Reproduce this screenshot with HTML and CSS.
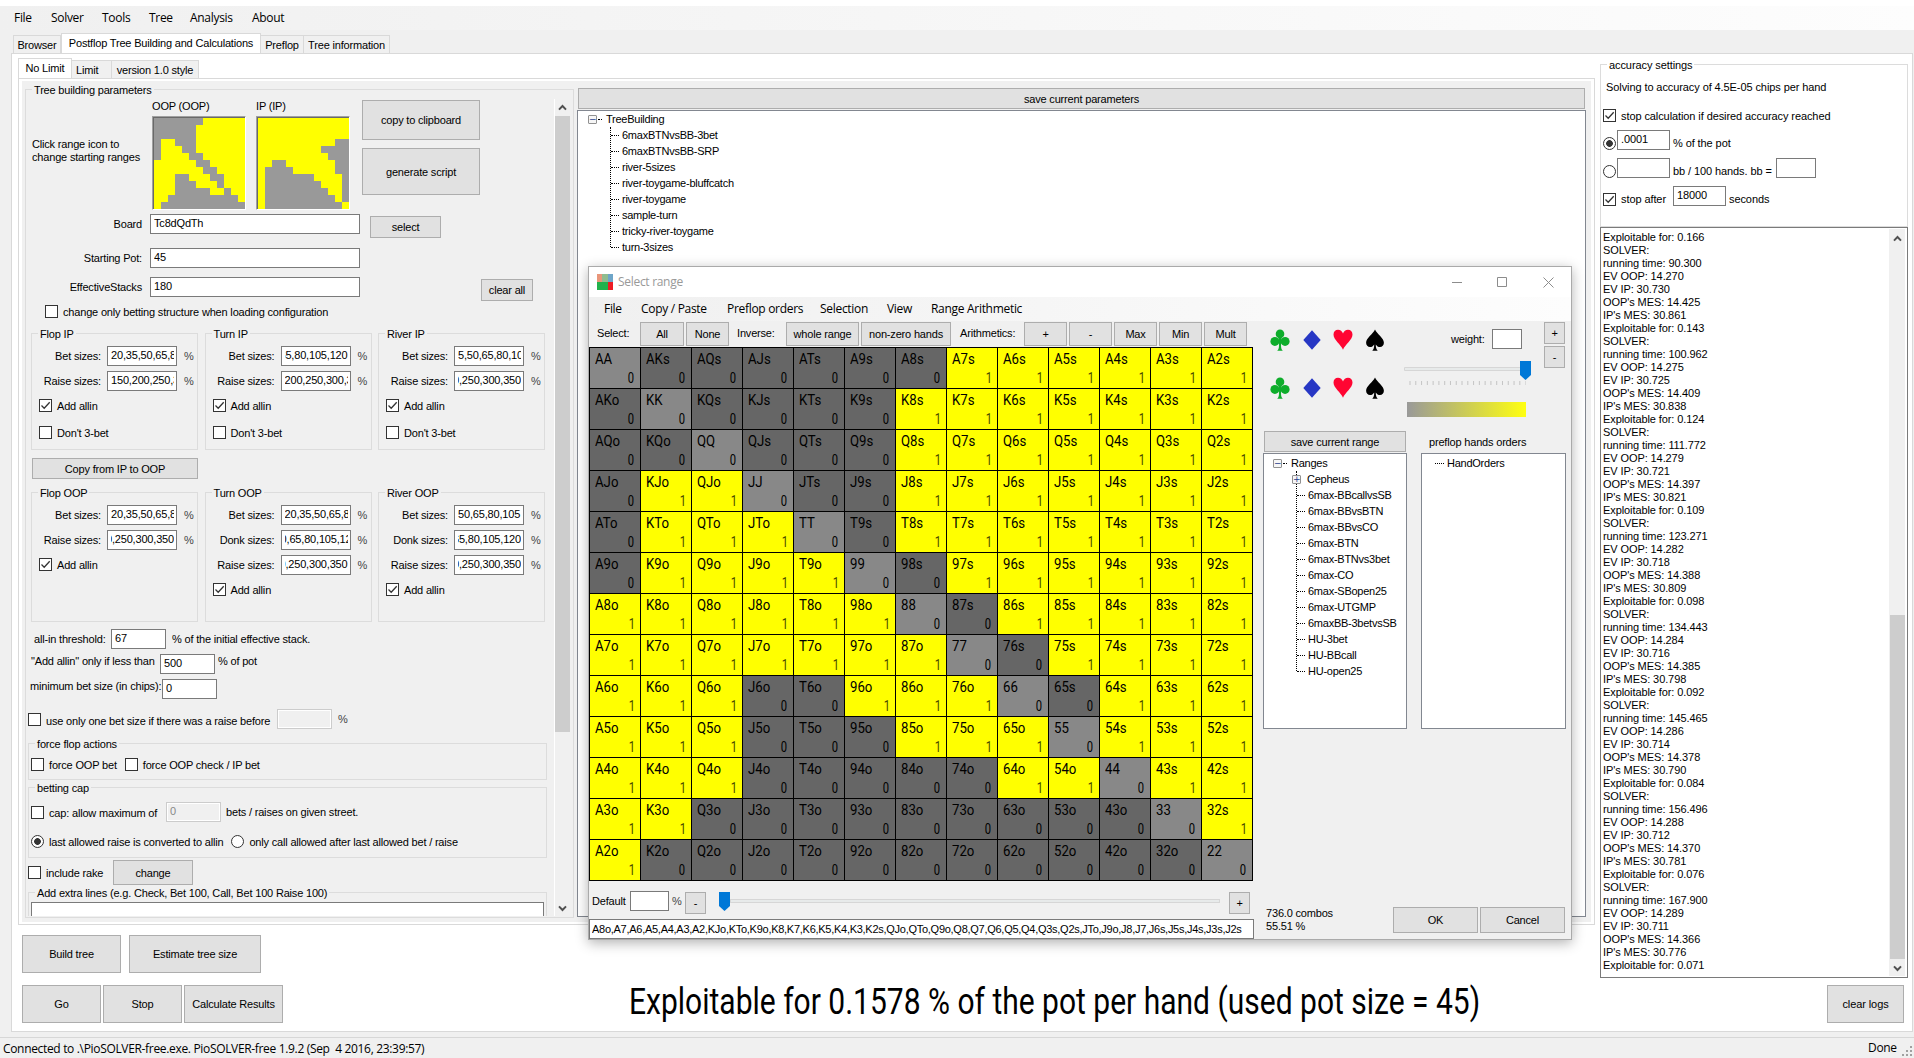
FILE: index.html
```html
<!DOCTYPE html>
<html lang="en">
<head>
<meta charset="utf-8">
<title>PioSOLVER-free</title>
<link rel="stylesheet" href="styles.css">
</head>
<body>
<svg class="defs" width="0" height="0">
  <symbol id="tick" viewBox="0 0 11 11"><path d="M1.5 5.5 4.2 8.2 9.7 2.2" fill="none" stroke="#333" stroke-width="1.3"/></symbol>
  <symbol id="up" viewBox="0 0 9 7"><path d="M1 5.6 4.5 2 8 5.6" fill="none" stroke="#505050" stroke-width="2"/></symbol>
  <symbol id="down" viewBox="0 0 9 7"><path d="M1 1.4 4.5 5 8 1.4" fill="none" stroke="#505050" stroke-width="2"/></symbol>
  <symbol id="club" viewBox="0 0 20 22"><g fill="#0ead2b"><circle cx="10" cy="4.9" r="4.3"/><circle cx="4.9" cy="12.4" r="4.5"/><circle cx="15.1" cy="12.4" r="4.5"/><path d="M8.6 8h2.8l.2 4 -.6 4c0 3 .4 4.400 1.800 5.700H7.200C8.600 20.400 9 19 9 16l-.6-4z"/></g></symbol>
  <symbol id="diamond" viewBox="0 0 20 22"><path d="M10 1.300 18.700 11 10 20.700 1.300 11z" fill="#2737c4"/></symbol>
  <symbol id="heart" viewBox="0 0 20 22"><path d="M10 20.800C8 15.500.5 11 .5 5.500.5 2.500 2.500.8 5 .8c2.300 0 4.200 1.400 5 3.800C10.800 2.200 12.700.8 15 .8c2.500 0 4.500 1.700 4.500 4.700C19.500 11 12 15.500 10 20.800z" fill="#ff0532"/></symbol>
  <symbol id="spade" viewBox="0 0 20 22"><path d="M10 .5C12 5 18.900 9 18.900 13.800c0 2.500-1.700 4.200-3.900 4.200-1.700 0-3.200-.9-4.200-2.600 0 3 .5 4.800 1.900 6.300H7.300c1.400-1.500 1.900-3.300 1.900-6.300C8.200 17.100 6.700 18 5 18c-2.200 0-3.900-1.700-3.900-4.200C1.100 9 8 5 10 .5z" fill="#000"/></symbol>
</svg>

<div class="strip"></div>
<nav class="menubar"><span class="m-file">File</span><span class="m-solver">Solver</span><span class="m-tools">Tools</span><span class="m-tree">Tree</span><span class="m-analysis">Analysis</span><span>About</span></nav>
<div class="tabs main-tabs"><span class="tab t-browser">Browser</span><span class="tab t-post on">Postflop Tree Building and Calculations</span><span class="tab t-pre">Preflop</span><span class="tab t-info">Tree information</span></div>

<main class="page">
  <section class="left">
    <div class="tabs inner-tabs"><span class="tab t-nl on">No Limit</span><span class="tab t-lim">Limit</span><span class="tab t-v1">version 1.0 style</span></div>
    <div class="inner-page"><div class="inner-body">

      <div class="group params"><span class="legend">Tree building parameters</span>
        <div class="params-row">
          <div class="pane">
            <div class="ranges">
              <p class="hint">Click range icon to<br>change starting ranges</p>
              <div class="range"><span>OOP (OOP)</span><div class="rangeicon" id="oop"></div></div>
              <div class="range ip"><span>IP (IP)</span><div class="rangeicon" id="ip"></div></div>
              <div class="range-btns"><button class="b-copy">copy to clipboard</button><button class="b-gen">generate script</button></div>
            </div>
            <div class="line l-board"><label>Board</label><div class="inp"><i>Tc8dQdTh</i></div><button class="b-select">select</button></div>
            <div class="line l-pot"><label>Starting Pot:</label><div class="inp"><i>45</i></div></div>
            <div class="line l-eff"><label>EffectiveStacks</label><div class="inp"><i>180</i></div><button class="b-clear">clear all</button></div>
            <div class="check only-struct"><b class="cb"></b>change only betting structure when loading configuration</div>

            <div class="streets ips">
              <div class="group street"><span class="legend">Flop IP</span>
                <div class="fields">
                  <div class="field"><label>Bet sizes:</label><div class="inp"><i>20,35,50,65,8</i></div><em>%</em></div>
                  <div class="field"><label>Raise sizes:</label><div class="inp"><i>150,200,250,3</i></div><em>%</em></div>
                </div>
                <div class="check"><b class="cb"><svg><use href="#tick"/></svg></b>Add allin</div>
                <div class="check second"><b class="cb"></b>Don't 3-bet</div>
              </div>
              <div class="group street"><span class="legend">Turn IP</span>
                <div class="fields">
                  <div class="field"><label>Bet sizes:</label><div class="inp end"><i>65,80,105,120</i></div><em>%</em></div>
                  <div class="field"><label>Raise sizes:</label><div class="inp"><i>200,250,300,3</i></div><em>%</em></div>
                </div>
                <div class="check"><b class="cb"><svg><use href="#tick"/></svg></b>Add allin</div>
                <div class="check second"><b class="cb"></b>Don't 3-bet</div>
              </div>
              <div class="group street"><span class="legend">River IP</span>
                <div class="fields">
                  <div class="field"><label>Bet sizes:</label><div class="inp"><i>5,50,65,80,10</i></div><em>%</em></div>
                  <div class="field"><label>Raise sizes:</label><div class="inp end"><i>0,250,300,350</i></div><em>%</em></div>
                </div>
                <div class="check"><b class="cb"><svg><use href="#tick"/></svg></b>Add allin</div>
                <div class="check second"><b class="cb"></b>Don't 3-bet</div>
              </div>
            </div>
            <button class="b-ip2oop">Copy from IP to OOP</button>
            <div class="streets oops">
              <div class="group street"><span class="legend">Flop OOP</span>
                <div class="fields">
                  <div class="field"><label>Bet sizes:</label><div class="inp"><i>20,35,50,65,8</i></div><em>%</em></div>
                  <div class="field"><label>Raise sizes:</label><div class="inp end"><i>0,250,300,350</i></div><em>%</em></div>
                </div>
                <div class="check"><b class="cb"><svg><use href="#tick"/></svg></b>Add allin</div>
              </div>
              <div class="group street"><span class="legend">Turn OOP</span>
                <div class="fields">
                  <div class="field"><label>Bet sizes:</label><div class="inp"><i>20,35,50,65,8</i></div><em>%</em></div>
                  <div class="field"><label>Donk sizes:</label><div class="inp mid"><i>0,65,80,105,12</i></div><em>%</em></div>
                  <div class="field"><label>Raise sizes:</label><div class="inp end"><i>0,250,300,350</i></div><em>%</em></div>
                </div>
                <div class="check"><b class="cb"><svg><use href="#tick"/></svg></b>Add allin</div>
              </div>
              <div class="group street"><span class="legend">River OOP</span>
                <div class="fields">
                  <div class="field"><label>Bet sizes:</label><div class="inp"><i>50,65,80,105</i></div><em>%</em></div>
                  <div class="field"><label>Donk sizes:</label><div class="inp end"><i>65,80,105,120</i></div><em>%</em></div>
                  <div class="field"><label>Raise sizes:</label><div class="inp end"><i>0,250,300,350</i></div><em>%</em></div>
                </div>
                <div class="check"><b class="cb"><svg><use href="#tick"/></svg></b>Add allin</div>
              </div>
            </div>

            <div class="opt o-thr"><label>all-in threshold:</label><div class="inp"><i>67</i></div><span>% of the initial effective stack.</span></div>
            <div class="opt o-add"><label>"Add allin" only if less than</label><div class="inp"><i>500</i></div><span>% of pot</span></div>
            <div class="opt o-min"><label>minimum bet size (in chips):</label><div class="inp"><i>0</i></div></div>
            <div class="opt o-one"><div class="check"><b class="cb"></b>use only one bet size if there was a raise before</div><div class="inp off"></div><em>%</em></div>
            <div class="group wide force"><span class="legend">force flop actions</span>
              <div class="checks"><div class="check"><b class="cb"></b>force OOP bet</div><div class="check"><b class="cb"></b>force OOP check / IP bet</div></div>
            </div>
            <div class="group wide cap"><span class="legend">betting cap</span>
              <div class="capline"><div class="check"><b class="cb"></b>cap: allow maximum of</div><div class="inp off"><i>0</i></div><span>bets / raises on given street.</span></div>
              <div class="checks radios"><div class="check"><b class="rb sel"></b>last allowed raise is converted to allin</div><div class="check"><b class="rb"></b>only call allowed after last allowed bet / raise</div></div>
            </div>
            <div class="rake"><div class="check"><b class="cb"></b>include rake</div><button>change</button></div>
            <div class="group wide extra"><span class="legend">Add extra lines (e.g. Check, Bet 100, Call, Bet 100 Raise 100)</span><div class="inp"></div></div>
          </div>
          <div class="scroll s-params"><svg><use href="#up"/></svg><div class="thumb"></div><svg><use href="#down"/></svg></div>
        </div>
      </div>

      <div class="saved">
        <button class="b-save">save current parameters</button>
        <div class="treebox">
          <div class="node root"><b class="exp">−</b><span>TreeBuilding</span></div>
          <ul class="kids"><li>6maxBTNvsBB-3bet</li><li>6maxBTNvsBB-SRP</li><li>river-5sizes</li><li>river-toygame-bluffcatch</li><li>river-toygame</li><li>sample-turn</li><li>tricky-river-toygame</li><li>turn-3sizes</li></ul>
        </div>
      </div>
    </div></div>

    <div class="bottom">
      <div class="runs">
        <div class="btnrow"><button class="b-build">Build tree</button><button class="b-est">Estimate tree size</button></div>
        <div class="btnrow tight"><button class="b-go">Go</button><button class="b-go">Stop</button><button class="b-build">Calculate Results</button></div>
      </div>
      <div class="result">Exploitable for 0.1578 % of the pot per hand (used pot size = 45)</div>
    </div>
  </section>

  <aside class="right">
    <div class="group acc"><span class="legend">accuracy settings</span>
      <p class="solving">Solving to accuracy of 4.5E-05 chips per hand</p>
      <div class="check a-stop"><b class="cb"><svg><use href="#tick"/></svg></b>stop calculation if desired accuracy reached</div>
      <div class="arow a-pct"><b class="rb sel"></b><div class="inp"><i>.0001</i></div><span>% of the pot</span></div>
      <div class="arow a-bb"><b class="rb"></b><div class="inp"></div><span>bb / 100 hands. bb =</span><div class="inp small"></div></div>
      <div class="arow a-after"><b class="cb"><svg><use href="#tick"/></svg></b><span class="after">stop after</span><div class="inp"><i>18000</i></div><span>seconds</span></div>
    </div>
    <div class="log"><pre id="log"></pre><div class="scroll s-log"><svg><use href="#up"/></svg><div class="thumb"></div><svg><use href="#down"/></svg></div></div>
    <button class="b-logs">clear logs</button>
  </aside>
</main>

<footer class="status"><span class="conn">Connected to .\PioSOLVER-free.exe. PioSOLVER-free 1.9.2 (Sep&nbsp; 4 2016, 23:39:57)</span><span class="done">Done</span>
  <svg class="grip" viewBox="0 0 11 11"><path fill="#a0a0a0" d="M8 0h2v2H8zM8 4h2v2H8zM4 4h2v2H4zM8 8h2v2H8zM4 8h2v2H4zM0 8h2v2H0z"/></svg></footer>

<div class="dialog">
  <header><svg class="app" viewBox="0 0 16 16"><path fill="#e9967a" d="M0 0h5v8H0z"/><path fill="#8fbc8f" d="M5 0h6v8H5z"/><path fill="#6ea5c8" d="M11 0h5v8h-5z"/><path fill="#22b14c" d="M0 8h11v8H0z"/><path fill="#ed1c24" d="M11 8h5v8h-5z"/></svg><span>Select range</span>
    <svg class="win" viewBox="0 0 103 11"><g fill="none" stroke="#8c8c8c"><path d="M0 5.500h10"/><path d="M45.500.5h9v9h-9z"/><path d="M91.500.5l10 10M101.500.5l-10 10"/></g></svg></header>
  <nav class="dmenu"><span class="d1">File</span><span class="d2">Copy / Paste</span><span class="d3">Preflop orders</span><span class="d4">Selection</span><span class="d5">View</span><span>Range Arithmetic</span></nav>
  <div class="dbody">
    <div class="dleft">
      <div class="tools"><label class="k1">Select:</label><button class="w44">All</button><button class="w43">None</button><label class="k2">Inverse:</label><button class="w73">whole range</button><button class="w90">non-zero hands</button><label class="k3">Arithmetics:</label><button class="w43">+</button><button class="w43">-</button><button class="w43">Max</button><button class="w43">Min</button><button class="w43">Mult</button></div>
      <div class="matrix" id="matrix"></div>
      <div class="def"><label>Default</label><div class="inp"></div><em>%</em><button>-</button><div class="slider"><svg viewBox="0 0 11 19"><path d="M0 0h11v14l-5.500 5L0 14z" fill="#0078d7"/></svg><div class="track"></div></div><button>+</button></div>
      <div class="inp hands"><i>A8o,A7,A6,A5,A4,A3,A2,KJo,KTo,K9o,K8,K7,K6,K5,K4,K3,K2s,QJo,QTo,Q9o,Q8,Q7,Q6,Q5,Q4,Q3s,Q2s,JTo,J9o,J8,J7,J6s,J5s,J4s,J3s,J2s</i></div>
    </div>
    <div class="dright">
      <div class="upper">
        <div class="suits">
          <svg><use href="#club"/></svg><svg><use href="#diamond"/></svg><svg><use href="#heart"/></svg><svg><use href="#spade"/></svg>
          <svg><use href="#club"/></svg><svg><use href="#diamond"/></svg><svg><use href="#heart"/></svg><svg><use href="#spade"/></svg>
        </div>
        <div class="weight">
          <div class="wline"><label>weight:</label><div class="inp"></div></div>
          <svg class="wslider" viewBox="0 0 128 26"><path d="M.5 6.500h120v3H.5z" fill="#e7eaea" stroke="#d6d6d6"/><path d="M116 0h11v14l-5.500 5-5.500-5z" fill="#0078d7"/><path d="M5.500 22h116.100" stroke="#c4c4c4" stroke-width="4" stroke-dasharray="1 4.780"/></svg>
          <div class="grad"></div>
        </div>
        <div class="pm"><button>+</button><button>-</button></div>
      </div>
      <div class="lists">
        <div class="list"><button>save current range</button>
          <div class="treebox">
            <div class="node root"><b class="exp">−</b><span>Ranges</span></div>
            <ul class="kids"><li class="has"><b class="exp">+</b>Cepheus</li><li>6max-BBcallvsSB</li><li>6max-BBvsBTN</li><li>6max-BBvsCO</li><li>6max-BTN</li><li>6max-BTNvs3bet</li><li>6max-CO</li><li>6max-SBopen25</li><li>6max-UTGMP</li><li>6maxBB-3betvsSB</li><li>HU-3bet</li><li>HU-BBcall</li><li>HU-open25</li></ul>
          </div></div>
        <div class="list orders"><label>preflop hands orders</label>
          <div class="treebox"><div class="node lone"><span>HandOrders</span></div></div></div>
      </div>
      <div class="dfoot"><p>736.0 combos<br>55.51 %</p><button>OK</button><button>Cancel</button></div>
    </div>
  </div>
</div>
<script src="app.js"></script>
</body>
</html>
```
FILE: styles.css
```css
*{box-sizing:border-box;margin:0;padding:0}
body{width:1914px;height:1058px;overflow:hidden;background:#f0f0f0;color:#000;font:11px/13px "Liberation Sans",Arial,sans-serif;letter-spacing:-.18px;display:flex;flex-direction:column;white-space:nowrap}
.defs{display:none}
svg{display:block;flex:none}
i,em{font-style:normal}
em{color:#444}
button{font:inherit;letter-spacing:inherit;color:#000;background:#e1e1e1;border:1px solid #adadad;flex:none;display:block;text-align:center;padding-top:1px}
.inp{border:1px solid #7a7a7a;background:#fff;height:20px;padding:0 3px;display:flex;align-items:center;flex:none}
.inp i{flex:1;min-width:0;overflow:hidden;display:flex;height:14px;line-height:13px}
.inp.end i{justify-content:flex-end}
.inp.mid i{justify-content:center}
.inp.off{border-color:#ccc;background:#f0f0f0;color:#888;box-shadow:inset 0 0 0 1px #fff}
.check{display:flex;align-items:center;height:13px;flex:none;padding-top:2px}
.cb,.rb{width:13px;height:13px;border:1px solid #333;background:#fff;flex:none;margin-right:5px;display:block}
.check .cb,.check .rb{margin-top:-2px}
.cb svg{width:11px;height:11px}
.rb{border-radius:50%}
.rb.sel{background:radial-gradient(circle,#333 3px,#fff 3.700px)}
.group{border:1px solid #dcdcdc;flex:none}
.legend{display:block;width:fit-content;height:13px;margin:-7px 0 0 6px;padding:1px 2px 0;background:#f0f0f0}

.strip{height:6px;background:#fff;flex:none}
.menubar,.dmenu{font:12px/24px "Open Sans","Noto Sans",sans-serif;letter-spacing:-.3px;height:24px;display:flex;flex:none;background:linear-gradient(90deg,#f0f0f0,#fdfdfd)}
.menubar{padding-left:14px}
.m-file{width:37px}.m-solver{width:51px}.m-tools{width:47px}.m-tree{width:41px}.m-analysis{width:62px}
.tabs{display:flex;align-items:flex-end;flex:none}
.tab{height:18px;border:1px solid #d9d9d9;border-left-width:0;border-bottom:0;line-height:18px;text-align:center}
.tab.on{background:#fff;height:21px;margin-bottom:-1px;line-height:19px;border-left-width:1px}
.main-tabs{height:20px;margin:3px 0 0 13px}
.t-browser{width:48px;border-left-width:1px}.t-post{width:200px}.t-pre{width:43px}.t-info{width:86px}

.page{margin-left:11px;width:1902px;height:979px;border:1px solid #d9d9d9;background:#fff;display:flex;flex:none}
.left{width:1588px;display:flex;flex-direction:column}
.inner-tabs{height:20px;margin:4px 0 0 6px}
.t-nl{width:54px}.t-lim{width:40px;text-align:left;padding-left:4px}.t-v1{width:87px}
.inner-tabs .tab:not(.on){background:#f0f0f0}
.inner-page{margin-left:6px;width:1577px;height:847px;border:1px solid #d9d9d9;padding:2px 3px;flex:none}
.inner-body{background:#f0f0f0;height:841px;display:flex}
.params{width:549px;height:829px;margin:8px 0 0 3px}
.params-row{display:flex;height:820px;overflow:hidden}
.pane{width:528px;flex:none}
.ranges{display:flex;height:114px}
.hint{margin:42px 0 0 6px;width:120px}
.range{width:94px}
.range span{display:block;height:20px;line-height:20px}
.range.ip{margin-left:10px}
.rangeicon{width:94px;height:94px;border:1px solid;border-color:#a0a0a0 #fff #fff #a0a0a0;display:grid;grid-template:repeat(13,7px)/repeat(13,7px);padding:1px 0 0 1px;box-shadow:inset 1px 1px 0 #696969}
.g{background:#999}.y{background:#ff0}
.range-btns{margin:4px 0 0 12px}
.b-copy{width:118px;height:40px}.b-gen{width:118px;height:47px;margin-top:8px}
.line{display:flex;height:20px}
.line label{width:116px;margin-right:8px;text-align:right;line-height:20px}
.line .inp{width:210px}
.l-board{margin-top:4px}.l-pot{margin-top:14px}.l-eff{margin-top:9px}
.b-select{width:71px;height:22px;margin:2px 0 0 10px}
.b-clear{width:52px;height:22px;margin:2px 0 0 121px}
.only-struct{margin:8px 0 0 19px}
.streets{display:flex;gap:6.5px;margin:15px 0 0 5px}
.street{width:167px;height:117px}
.oops{margin-top:13px}
.oops .street{height:130px}
.fields{display:flex;flex-direction:column;gap:5px;margin:6px 0 8px}
.field{display:flex;height:20px;align-items:center}
.field label{width:69px;margin-right:6px;text-align:right}
.field .inp{width:70px;margin-right:7px;padding:0 2px 0 3px}
.street .check{margin-left:7px}
.street .second{margin-top:14px}
.b-ip2oop{width:166px;height:21px;margin:8px 0 0 6px}
.opt{display:flex;height:20px;line-height:14px;margin-top:5px}
.opt .inp{width:55px}
.o-thr{margin-top:7px;line-height:20px}
.o-thr label{width:77px;margin-left:8px}.o-thr span{margin-left:6px}
.o-add label{width:129px;margin-left:5px}.o-add span{margin-left:3px}
.o-min label{width:132px;margin-left:4px}
.o-one{margin-top:10px;line-height:20px}
.o-one .check{margin:4px 0 0 2px;width:249px}.o-one em{margin-left:6px}
.wide{width:519px;margin-left:2px}
.force{height:37px;margin-top:14px}
.checks{display:flex;gap:8px;margin:8px 0 0 2px}
.cap{height:71px;margin-top:7px}
.capline{display:flex;align-items:center;height:20px;margin:8px 0 0 2px}
.capline .check{width:135px}.capline .inp{width:55px;margin-right:5px}
.radios{margin-top:13px}
.rake{display:flex;align-items:center;height:25px;margin:2px 0 0 2px}
.rake .check{width:85px}.rake button{width:80px;height:25px}
.extra{margin-top:7px;height:40px}
.extra .inp{margin:3px 2px 0;height:40px}
.scroll{width:16px;flex:none;border-left:1px solid #fff;display:flex;flex-direction:column;align-items:center}
.scroll svg{width:9px;height:7px}
.scroll .thumb{width:15px;background:#cdcdcd}
.s-params{height:817px;margin-top:3px}
.s-params svg:first-child{margin:5px 0}
.s-params .thumb{height:616px;margin-bottom:173px}

.saved{margin:7px 0 0 3px;width:1009px}
.b-save{width:1007px;height:21px;margin:0 0 1px 1px}
.treebox{border:1px solid #828790;background:#fff;padding-top:1px;letter-spacing:-.25px}
.saved .treebox{height:807px;padding-top:0}
.node{display:flex;align-items:center;height:16px}
.root{padding-left:10px}
.root::after{content:"";order:1;width:4px;border-top:1px dotted #000;margin:0 4px 0 1px}
.root span{order:2}
.exp{width:9px;height:9px;border:1px solid #919191;border-radius:1px;background:#f6f6f6;color:#24408c;font:9px/7px "DejaVu Sans",sans-serif;letter-spacing:0;text-align:center;flex:none}
.kids{list-style:none;display:flex;flex-direction:column;margin-left:32px;border-left:1px dotted #000}
.kids li{height:16px;line-height:16px;display:flex;align-items:center}
.kids li::before{content:"";width:8px;border-top:1px dotted #000;margin-right:3px}
.kids li:last-child{margin-bottom:-8px}
.kids .has{margin-left:-5px}
.kids .has::before{display:none}
.kids .has .exp{margin-right:6px}

.bottom{display:flex;margin:10px 0 0 10px}
.btnrow{display:flex;gap:8px;margin-bottom:12px}
.btnrow.tight{gap:2px}
.btnrow button{height:38px}
.b-build{width:99px}.b-est{width:132px}.b-go{width:79px}
.runs{width:607px}
.result{font:37px/44px Roboto,sans-serif;letter-spacing:0;margin-top:45px;transform:scaleX(.811);transform-origin:0 0;width:900px}

.right{width:308px;letter-spacing:-.09px}
.acc{height:163px;margin-top:10px}
.acc .legend{background:#fff}
.solving{margin:10px 0 0 5px}
.a-stop{margin:15px 0 0 2px}
.arow{display:flex;height:20px;margin:8px 0 0 2px}
.arow .rb,.arow .cb{margin:7px 1px 0 0}
.arow .inp{width:53px;margin-right:2px}
.arow .inp.small{width:40px}
.arow span{line-height:27px;padding-left:1px}
.arow .inp+span+.inp{margin-left:4px}
.a-after .after{width:56px;padding-left:4px}
.log{height:751px;border:1px solid #7a7a7a;display:flex;justify-content:space-between;padding:3px 2px 2px}
.log pre{font:11px/13px "Liberation Sans",Arial,sans-serif}
.s-log{background:#f0f0f0;border:0;margin-top:-2px;height:747px}
.s-log svg:first-child{margin:6px 0}
.s-log .thumb{height:344px;margin:367px 0 6px}
.b-logs{width:77px;height:38px;margin:7px 0 0 227px}
.status{margin-top:5px;height:21px;border-top:1px solid #d7d7d7;display:flex;flex:none;font:12px/22px "Open Sans","Noto Sans",sans-serif;letter-spacing:-.33px}
.conn{padding-left:3px;width:1868px}
.done{width:34px;line-height:20px}
.grip{width:11px;height:11px;margin:8px 0 0}

.dialog{position:absolute;left:588px;top:266px;width:984px;height:674px;border:1px solid #aaa;background:#f0f0f0;box-shadow:0 3px 12px rgba(0,0,0,.3)}
.dialog header{height:30px;background:#fff;display:flex;align-items:center;padding:0 16px 0 8px;font:12px/30px "Open Sans",sans-serif;color:#999;letter-spacing:-.3px}
.app{width:16px;height:16px;margin:-1px 5px 0 0}
.win{width:103px;height:11px;margin-left:auto}
.dmenu{padding-left:15px}
.d1{width:37px}.d2{width:86px}.d3{width:93px}.d4{width:67px}.d5{width:44px}
.dbody{display:flex}
.dleft{width:666px}
.tools{display:flex;height:26px;padding:1px 0 0 8px;gap:2px}
.tools label{line-height:23px}
.tools button{height:24px}
.k1{width:41px}.k2{width:53px;padding-left:6px}.k3{width:69px;padding-left:7px}
.w44{width:44px}.w43{width:43px}.w73{width:73px}.w90{width:90px}
.matrix{width:664px;height:534px;background:#000;display:grid;grid-template:repeat(13,40px)/repeat(13,50px);gap:1px;padding:1px}
.cell{font-family:Roboto,sans-serif;letter-spacing:0;background:#666;padding:2px 6px 0 5px;display:flex;flex-direction:column}
.cell.pair{background:#888}
.cell.hit{background:#ff0;padding-right:5px}
.cell .h{font-size:15px;line-height:18px;transform:scaleX(.88);transform-origin:0 0}
.cell .n{font-size:14px;line-height:20px;text-align:right;transform:scaleX(.8);transform-origin:100% 0}
.hit .n{color:#4a4a00}
.def{display:flex;align-items:center;height:20px;margin-top:10px;padding-left:3px}
.def label{width:38px}
.def .inp{width:39px;margin-right:3px}
.def button{width:21px;height:22px;margin-top:3px}
.def em{width:13px}
.slider{display:flex;align-items:center;width:523px;padding-left:13px}
.slider svg{width:11px;height:19px}
.track{width:490px;height:4px;border:1px solid #d6d6d6;background:#e7eaea}
.hands{width:665px;margin-top:8px;padding:2px 2px 0;letter-spacing:-.27px}
.dright{width:316px;padding:1px 5px 0 8px}
.upper{display:flex;height:109px}
.suits{display:grid;grid-template-columns:repeat(4,20px);column-gap:11.7px;grid-auto-rows:22px;row-gap:26px;margin:7px 0 0 7px;width:134px;height:70px}
.suits svg{width:20px;height:22px}
.weight{width:140px}
.wline{display:flex;margin:7px 0 0 47px;line-height:20px}
.wline label{width:41px}.wline .inp{width:30px}
.wslider{width:128px;height:26px;margin-top:12px}
.grad{width:119px;height:15px;margin:15px 0 0 3px;background:linear-gradient(90deg,#999,#ff1)}
.pm button{width:21px;height:22px;margin-bottom:2px}
.lists{display:flex;gap:14px}
.list{width:144px}
.list button{width:142px;height:21px;margin:0 0 1px 1px}
.list .treebox{height:276px}
.list.orders{width:145px}
.list label{display:block;height:22px;line-height:22px;padding-left:8px}
.list .root{padding-left:9px}
.lone::before{content:"";width:9px;border-top:1px dotted #000;margin:0 3px 0 13px}
.dfoot{display:flex;margin-top:178px;gap:2px}
.dfoot p{width:128px;padding-left:3px}
.dfoot button{width:85px;height:26px}
```
FILE: app.js
```js
const ranks = [...'AKQJT98765432'];
// '#' marks a hand in the range, '.' a hand outside it.
const oop = [
  '.......######', '......#######', '......#######', '.##...#######', '.###..#######',
  '.####..######', '######..#####', '#######..####', '###..###..###', '###...###.###',
  '###.....##.##', '##..........#', '#............'];
const ip = [
  '#############', '#############', '#############', '###########..', '#########....',
  '##########...', '##..#######..', '#....######..', '#.......####.', '#........###.',
  '#.........##.', '#..........#.', '#...........#'];

const icon = (id, rows) => {
  document.getElementById(id).innerHTML =
    rows.join('').replace(/./g, c => `<div class="${c === '#' ? 'y' : 'g'}"></div>`);
};
icon('oop', oop);
icon('ip', ip);

let cells = '';
ranks.forEach((a, r) => ranks.forEach((b, c) => {
  const hit = oop[r][c] === '#';
  const name = r === c ? a + a : c > r ? a + b + 's' : b + a + 'o';
  cells += `<div class="cell${hit ? ' hit' : r === c ? ' pair' : ''}"><span class="h">${name}</span><span class="n">${hit ? 1 : 0}</span></div>`;
}));
document.getElementById('matrix').innerHTML = cells;

const steps = [
  ['90.300', '14.270', '30.730', '14.425', '30.861', '0.143'],
  ['100.962', '14.275', '30.725', '14.409', '30.838', '0.124'],
  ['111.772', '14.279', '30.721', '14.397', '30.821', '0.109'],
  ['123.271', '14.282', '30.718', '14.388', '30.809', '0.098'],
  ['134.443', '14.284', '30.716', '14.385', '30.798', '0.092'],
  ['145.465', '14.286', '30.714', '14.378', '30.790', '0.084'],
  ['156.496', '14.288', '30.712', '14.370', '30.781', '0.076'],
  ['167.900', '14.289', '30.711', '14.366', '30.776', '0.071']];
document.getElementById('log').textContent = 'Exploitable for: 0.166\n' + steps.map(s =>
  `SOLVER:\nrunning time: ${s[0]}\nEV OOP: ${s[1]}\nEV IP: ${s[2]}\nOOP's MES: ${s[3]}\nIP's MES: ${s[4]}\nExploitable for: ${s[5]}`).join('\n');
```
